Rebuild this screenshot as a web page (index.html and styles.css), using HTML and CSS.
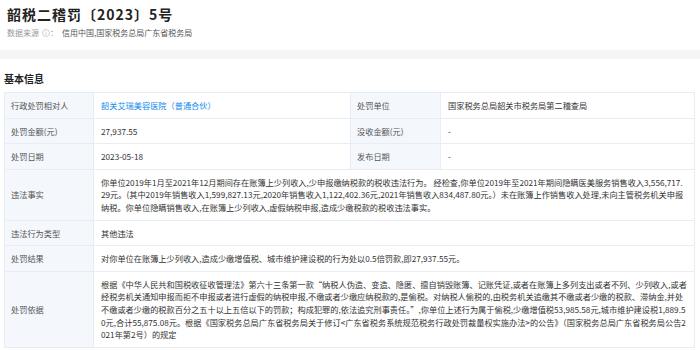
FILE: index.html
```html
<!DOCTYPE html>
<html lang="zh-CN">
<head>
<meta charset="UTF-8">
<title>韶税二稽罚〔2023〕5号</title>
<link rel="stylesheet" href="styles.css">
</head>
<body>

<!-- 标题 -->

<div class="header">

    <h1 class="title">韶税二稽罚〔2023〕5号</h1>

    <div class="source">
        <span class="source-label">数据来源</span>
        <svg class="info" width="8" height="8" viewBox="0 0 8 8">
            <circle cx="4" cy="4" r="3.5" fill="none" stroke="#bbb" stroke-width="0.7"/>
            <rect x="3.65" y="3.3" width="0.7" height="2.6" fill="#bbb"/>
            <rect x="3.65" y="2" width="0.7" height="0.7" fill="#bbb"/>
        </svg>
        <span class="source-label">：</span>
        <span class="source-value">信用中国,国家税务总局广东省税务局</span>
    </div>

</div>

<div class="band"></div>

<!-- 基本信息 -->

<div class="section">

    <h2 class="section-title">基本信息</h2>

    <table class="info-table">
        <colgroup>
            <col class="c-label">
            <col class="c-value">
            <col class="c-label2">
            <col>
        </colgroup>
        <tr>
            <td class="label">行政处罚相对人</td>
            <td><a class="link" href="#">韶关艾瑞美容医院（普通合伙）</a></td>
            <td class="label">处罚单位</td>
            <td>国家税务总局韶关市税务局第二稽查局</td>
        </tr>
        <tr>
            <td class="label">处罚金额(元)</td>
            <td>27,937.55</td>
            <td class="label">没收金额(元)</td>
            <td>-</td>
        </tr>
        <tr>
            <td class="label">处罚日期</td>
            <td>2023-05-18</td>
            <td class="label">发布日期</td>
            <td>-</td>
        </tr>
        <tr>
            <td class="label">违法事实</td>
            <td colspan="3" class="long">你单位2019年1月至2021年12月期间存在账簿上少列收入,少申报缴纳税款的税收违法行为。 经检查,你单位2019年至2021年期间隐瞒医美服务销售收入3,556,717.29元。(其中2019年销售收入1,599,827.13元,2020年销售收入1,122,402.36元,2021年销售收入834,487.80元。）未在账簿上作销售收入处理,未向主管税务机关申报纳税。你单位隐瞒销售收入,在账簿上少列收入,虚假纳税申报,造成少缴税款的税收违法事实。</td>
        </tr>
        <tr>
            <td class="label">违法行为类型</td>
            <td colspan="3">其他违法</td>
        </tr>
        <tr>
            <td class="label">处罚结果</td>
            <td colspan="3">对你单位在账簿上少列收入,造成少缴增值税、城市维护建设税的行为处以0.5倍罚款,即27,937.55元。</td>
        </tr>
        <tr>
            <td class="label">处罚依据</td>
            <td colspan="3" class="long">根据《中华人民共和国税收征收管理法》第六十三条第一款“纳税人伪造、变造、隐匿、擅自销毁账簿、记账凭证,或者在账簿上多列支出或者不列、少列收入,或者经税务机关通知申报而拒不申报或者进行虚假的纳税申报,不缴或者少缴应纳税款的,是偷税。对纳税人偷税的,由税务机关追缴其不缴或者少缴的税款、滞纳金,并处不缴或者少缴的税款百分之五十以上五倍以下的罚款；构成犯罪的,依法追究刑事责任。”,你单位上述行为属于偷税,少缴增值税53,985.58元,城市维护建设税1,889.50元,合计55,875.08元。根据《国家税务总局广东省税务局关于修订&lt;广东省税务系统规范税务行政处罚裁量权实施办法&gt;的公告》（国家税务总局广东省税务局公告2021年第2号）的规定</td>
        </tr>
    </table>

</div>

</body>
</html>
```

FILE: styles.css
```css
*{
    margin:0;
    padding:0;
    box-sizing:border-box;
}

body{
    font-family:"Noto Sans CJK SC","Noto Sans",sans-serif;
    color:#333;
    background:#fff;
}

/* HEADER */

.header{
    padding:4px 7px 0;
}

.title{
    font-size:14px;
    line-height:20px;
    font-weight:bold;
    letter-spacing:1px;
    color:#222;
}

.source{
    margin-top:3px;
    font-size:8px;
    line-height:12px;
    display:flex;
    align-items:center;
}

.source-label{
    color:#999;
}

.info{
    margin-left:3px;
}

.source-value{
    margin-left:4px;
    color:#555;
}

.band{
    margin-top:11px;
    height:9px;
    background:#f5f5f5;
}

/* BASIC INFO */

.section{
    padding:0 5px 0 4px;
}

.section-title{
    margin-top:13px;
    font-size:10px;
    line-height:14px;
    font-weight:bold;
    color:#222;
}

.info-table{
    margin-top:6px;
    width:100%;
    border-collapse:collapse;
    table-layout:fixed;
    font-size:8.2px;
}

.c-label{
    width:89px;
}

.c-value{
    width:257px;
}

.c-label2{
    width:90px;
}

.info-table td{
    border:1px solid #e6edf5;
    padding:6px 7px;
    line-height:12.6px;
    vertical-align:middle;
    word-break:break-all;
}

.info-table td.label{
    background:#f4f8fd;
    color:#555;
    padding-left:6px;
}

.link{
    color:#128bed;
    text-decoration:none;
}
```
